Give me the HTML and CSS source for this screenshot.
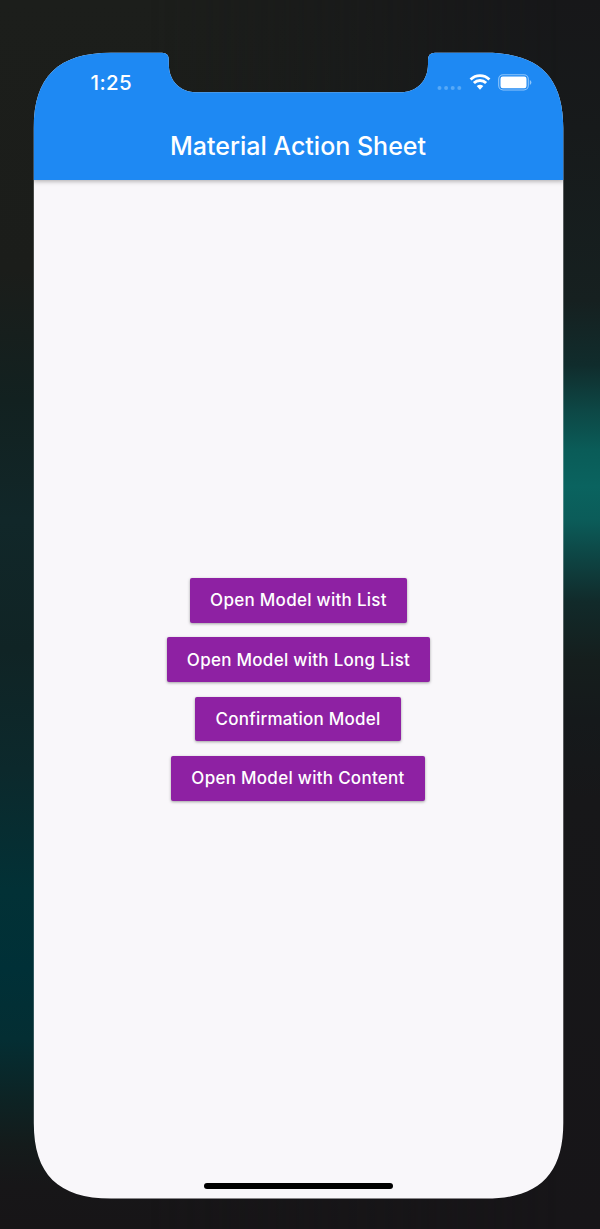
FILE: index.html
```html
<!DOCTYPE html>
<html lang="en">
<head>
<meta charset="utf-8">
<title>Material Action Sheet</title>
<link rel="stylesheet" href="styles.css">
</head>
<body>
<div class="glow"></div>
<div class="phone">
  <header class="app-bar">
    <div class="status">
      <span class="time">1:25</span>
      <div class="indicators">
        <svg class="dots" width="26" height="6" viewBox="0 0 26 6"><circle cx="2.5" cy="3" r="2"/><circle cx="9.1" cy="3" r="2"/><circle cx="15.7" cy="3" r="2"/><circle cx="22.3" cy="3" r="2"/></svg>
        <svg class="wifi" width="22" height="16" viewBox="0 0 22 16"><path d="M1.6 5.5a13.4 13.4 0 0 1 18.8 0M4.9 9a8.7 8.7 0 0 1 12.2 0" fill="none" stroke="#fff" stroke-width="2.9"/><path d="M7.7 12.1a5 5 0 0 1 6.6 0L11 15.7z" fill="#fff"/></svg>
        <svg class="battery" width="34" height="17" viewBox="0 0 34 17"><rect x=".7" y=".8" width="29.6" height="15.2" rx="4.4" fill="none" stroke="#8fc6fb" stroke-width="1.1"/><rect x="2.5" y="2.6" width="26" height="11.6" rx="2.2" fill="#fff"/><path d="M31.8 5.9q1.6.8 1.6 2.5t-1.6 2.5z" fill="#8fc6fb"/></svg>
      </div>
    </div>
    <h1 class="title">Material Action Sheet</h1>
  </header>
  <main class="actions">
    <button class="action list">Open Model with List</button>
    <button class="action long-list">Open Model with Long List</button>
    <button class="action confirm">Confirmation Model</button>
    <button class="action content">Open Model with Content</button>
  </main>
  <div class="home-indicator"></div>
</div>
</body>
</html>
```
FILE: styles.css
```css
* { box-sizing: border-box; }
body {
  margin: 0;
  height: 1229px;
  padding: 52px 36px 30px 33px;
  overflow: hidden;
  font-family: Inter, "Liberation Sans", sans-serif;
  background: linear-gradient(#1c1e1b 0, #1b1d1a 270px, #122120 400px, #112729 520px, #102425 650px, #0c292c 770px, #023136 890px, #003037 970px, #042e33 1040px, #0d2324 1100px, #141b1b 1145px, #171618 1185px, #171517 1229px);
}
.glow {
  position: absolute;
  inset: 0;
  background: linear-gradient(#171719 0, #171a1b 130px, #162020 300px, #102c2c 365px, #0d4745 410px, #0a5c58 450px, #0a635f 487px, #0b5c59 520px, #0e4241 562px, #112a2a 602px, #151e1d 660px, #15191b 720px, #171719 800px, #171518 1229px);
  -webkit-mask-image: linear-gradient(90deg, transparent 150px, #000 565px);
  mask-image: linear-gradient(90deg, transparent 150px, #000 565px);
}
.phone {
  position: relative;
  display: flex;
  flex-direction: column;
  width: 531px;
  height: 1147px;
  background: #f9f7fa;
  clip-path: path("M.8 76C.8 25 25 .8 78 .8H129Q135.8 .8 135.8 8V12C135.8 29 147 40.3 164 40.3H367C384 40.3 395 29 395 12V8Q395 .8 402 .8H453C506 .8 530.3 25 530.3 76V1071C530.3 1122 506 1146.6 453 1146.6H78C25 1146.6 .8 1122 .8 1071Z");
}
.app-bar {
  flex: none;
  height: 128.3px;
  background: #1e89f3;
  color: #fff;
  box-shadow: 0 1px 5px rgba(0, 0, 0, .34);
}
.status {
  display: flex;
  justify-content: space-between;
  align-items: flex-start;
  height: 66px;
  padding: 18px 32px 0 57.5px;
}
.time {
  font-size: 20.5px;
  font-weight: 500;
  line-height: 25px;
  letter-spacing: .4px;
}
.indicators { display: flex; align-items: flex-start; padding-top: 4px; }
.dots { margin: 11px 6px 0 0; fill: #57a9f7; }
.wifi { margin: 0 7px 0 0; }
.title {
  margin: 13px 1px 0 0;
  text-align: center;
  font-size: 25px;
  font-weight: 450;
  line-height: 30px;
}
.actions {
  flex: 1;
  display: flex;
  flex-direction: column;
  align-items: center;
  gap: 14.8px;
  padding-top: 397.7px;
}
.action {
  height: 44.6px;
  padding: 0;
  border: 0;
  border-radius: 2px;
  background: #8e21a3;
  color: #fff;
  font: 500 17px/44px Inter, "Liberation Sans", sans-serif;
  letter-spacing: .28px;
  white-space: nowrap;
  box-shadow: 0 1px 3px rgba(0, 0, 0, .36);
}
.list { width: 217px; }
.long-list { width: 263px; }
.confirm { width: 206px; margin-right: 1px; letter-spacing: .22px; }
.content { width: 254px; margin-right: 1px; }
.home-indicator {
  flex: none;
  align-self: center;
  width: 189.5px;
  height: 6px;
  margin-bottom: 10.3px;
  border-radius: 3px;
  background: #000;
}
```
